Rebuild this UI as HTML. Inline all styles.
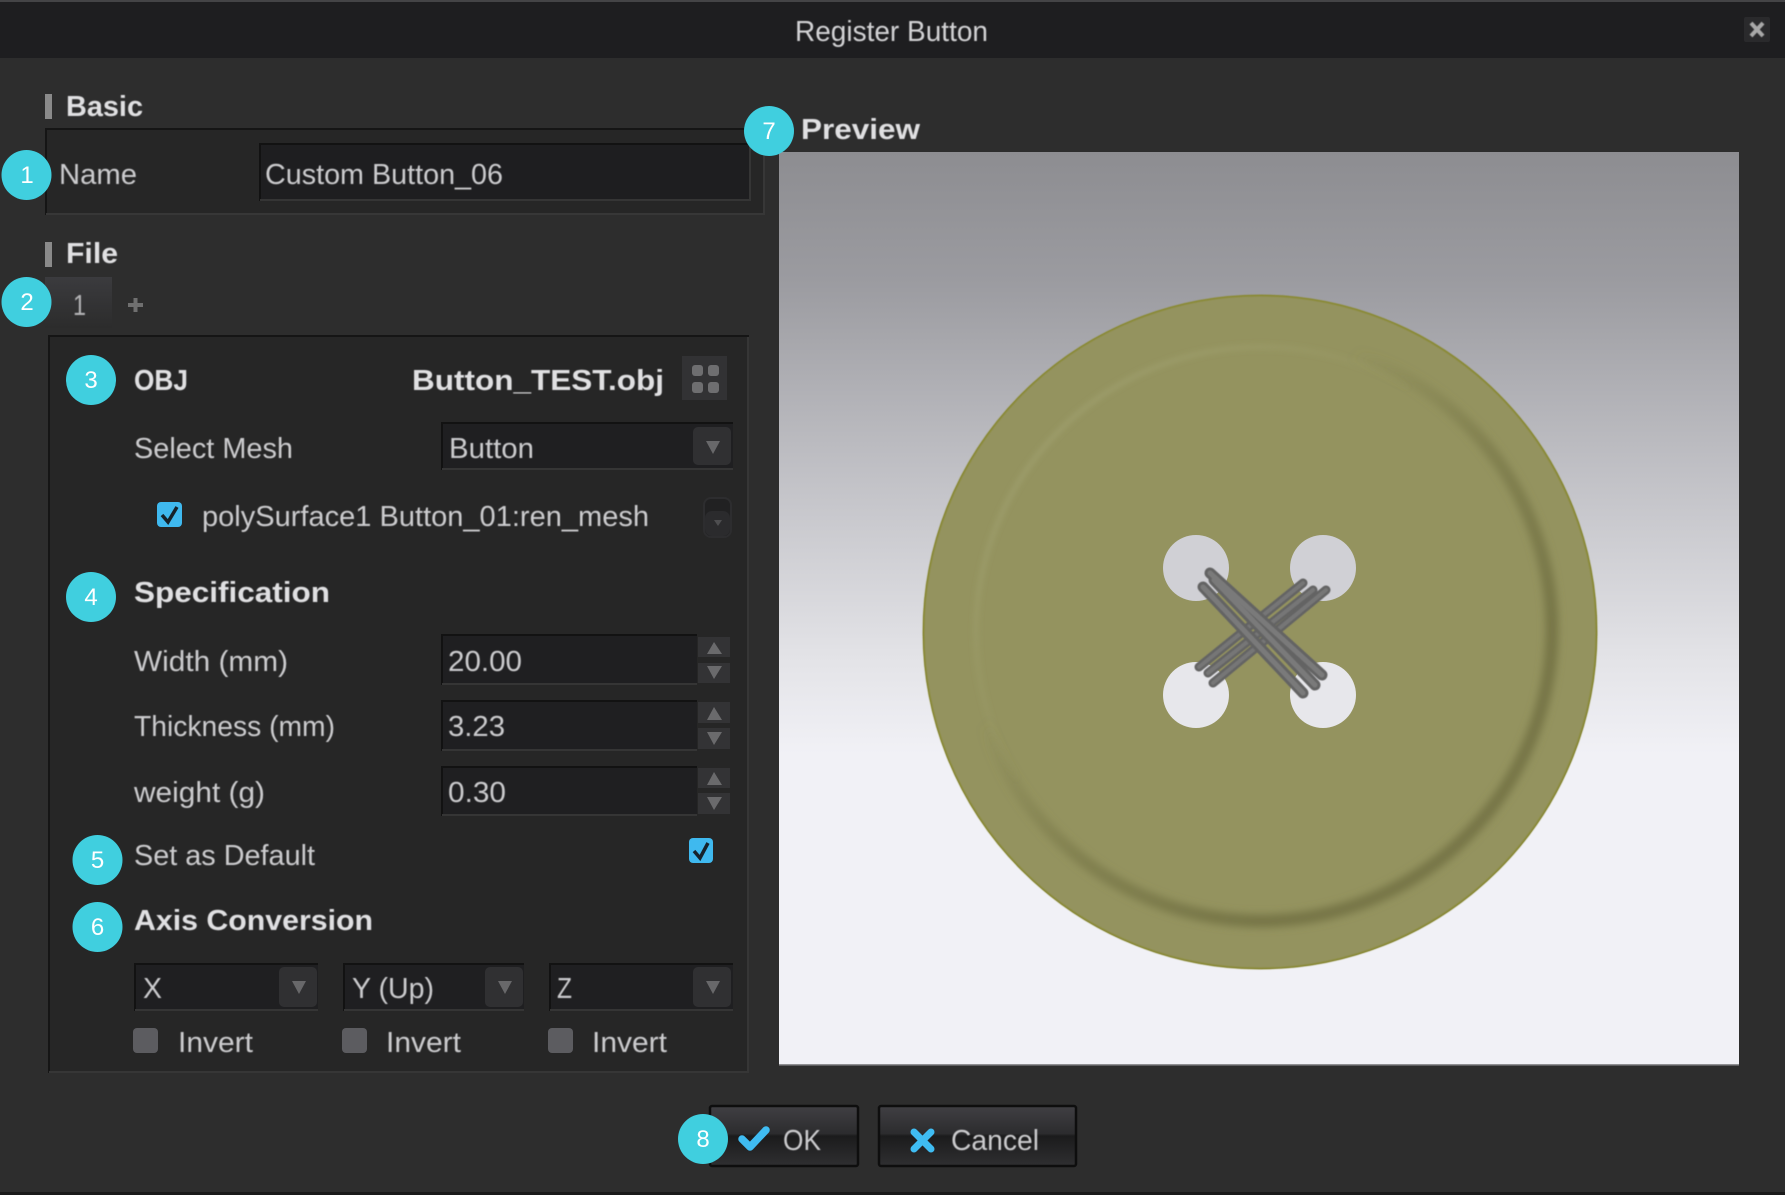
<!DOCTYPE html>
<html><head><meta charset="utf-8"><title>Register Button</title>
<style>
html,body{margin:0;padding:0;background:#2d2d2d;width:1785px;height:1195px;overflow:hidden}
svg{display:block}
text{font-family:"Liberation Sans",sans-serif}
.n{font-size:28.500px;fill:#cbcbcd}
.b{font-size:28.500px;font-weight:bold;fill:#e0e0e2}
.d{font-size:24px;fill:#fff;text-anchor:middle}
.tx{filter:url(#soft)}
</style></head><body>
<svg width="1785" height="1195" viewBox="0 0 1785 1195" xmlns="http://www.w3.org/2000/svg">
<defs>
<filter id="soft" x="-5%" y="-20%" width="110%" height="140%"><feGaussianBlur stdDeviation="0.5"/></filter>
<filter id="b3" x="-10%" y="-10%" width="120%" height="120%"><feGaussianBlur stdDeviation="4"/></filter>
<filter id="b2" x="-10%" y="-10%" width="120%" height="120%"><feGaussianBlur stdDeviation="2.500"/></filter>
<filter id="b1" x="-20%" y="-20%" width="140%" height="140%"><feGaussianBlur stdDeviation="0.6"/></filter>
<linearGradient id="bg" x1="0" y1="152" x2="0" y2="1065" gradientUnits="userSpaceOnUse">
<stop offset="0" stop-color="#8d8d91"/><stop offset=".14" stop-color="#9b9ba0"/><stop offset=".36" stop-color="#c2c2c7"/><stop offset=".56" stop-color="#e4e4e8"/><stop offset=".66" stop-color="#f1f1f6"/><stop offset="1" stop-color="#f1f1f6"/>
</linearGradient>
<linearGradient id="tab" x1="0" y1="0" x2="0" y2="1"><stop offset="0" stop-color="#3b3b3e"/><stop offset="1" stop-color="#2c2c2c"/></linearGradient>
<linearGradient id="btn" x1="0" y1="0" x2="0" y2="1">
<stop offset="0" stop-color="#403f43"/><stop offset=".46" stop-color="#2c2c2e"/><stop offset=".5" stop-color="#1b1b1c"/><stop offset="1" stop-color="#2f2f31"/>
</linearGradient>
<linearGradient id="grooveD" x1="0.1" y1="0.1" x2="0.9" y2="0.9">
<stop offset=".3" stop-color="#7a7949" stop-opacity="0"/><stop offset=".55" stop-color="#7a7949" stop-opacity=".7"/><stop offset=".8" stop-color="#777647"/><stop offset="1" stop-color="#777647"/>
</linearGradient>
<linearGradient id="grooveL" x1="0.1" y1="0.1" x2="0.9" y2="0.9">
<stop offset="0" stop-color="#9c9c6a"/><stop offset=".4" stop-color="#9c9c6a" stop-opacity="0"/>
</linearGradient>
</defs>

<rect width="1785" height="1195" fill="#2d2d2d"/>
<rect width="1785" height="58" fill="#1e1e20"/>
<rect width="1785" height="2" fill="#444446"/>
<rect y="1192" width="1785" height="3" fill="#1a1a1a"/>

<!-- close -->
<rect x="1744" y="17" width="26" height="25" rx="2" fill="#2a2a2c"/>
<path d="M1751 23L1763 36M1763 23L1751 36" stroke="#a8a8a8" stroke-width="4" fill="none" filter="url(#b1)"/>

<!-- Basic -->
<rect x="45" y="94" width="7" height="25" fill="#8a8a8a"/>
<rect x="45" y="128" width="720" height="87" fill="#262626"/>
<path d="M46 215V129H765" stroke="#151515" stroke-width="2" fill="none"/>
<path d="M46 214H764V130" stroke="#373737" stroke-width="2" fill="none"/>
<rect x="259" y="143" width="492" height="58" fill="#1e1e20"/>
<path d="M260 201V144H751" stroke="#121212" stroke-width="2" fill="none"/>
<path d="M260 200H750V145" stroke="#353535" stroke-width="2" fill="none"/>

<!-- File -->
<rect x="45" y="242" width="7" height="25" fill="#8a8a8a"/>
<rect x="45" y="277" width="67" height="51" fill="url(#tab)"/>
<rect x="128" y="303" width="15" height="4" fill="#6f6f6f"/>
<rect x="133.500" y="298" width="4" height="14" fill="#6f6f6f"/>

<!-- main panel -->
<rect x="48" y="335" width="701" height="738" fill="#262626"/>
<path d="M49 1073V336H749" stroke="#151515" stroke-width="2" fill="none"/>
<path d="M49 1072H748V337" stroke="#363636" stroke-width="2" fill="none"/>

<!-- grid icon -->
<rect x="682" y="356" width="45" height="44" fill="#323234"/>
<rect x="692" y="365" width="11" height="11" rx="3" fill="#6e6e70"/>
<rect x="708" y="365" width="11" height="11" rx="3" fill="#6e6e70"/>
<rect x="692" y="382" width="11" height="11" rx="3" fill="#6e6e70"/>
<rect x="708" y="382" width="11" height="11" rx="3" fill="#6e6e70"/>

<!-- select mesh combo -->
<rect x="441" y="422" width="292" height="48" fill="#1f1f21"/>
<path d="M442 470V423H733" stroke="#121212" stroke-width="2" fill="none"/>
<path d="M442 469H733" stroke="#353535" stroke-width="2" fill="none"/>
<rect x="693" y="427" width="38" height="38" rx="5" fill="#303032"/>
<path d="M706 441H720L713 454Z" fill="#68686a"/>

<!-- checkbox mesh -->
<rect x="157" y="502" width="25" height="25" rx="4" fill="#3fb9ef"/>
<path d="M162 515L168 522L177 507" stroke="#16222a" stroke-width="3.500" fill="none"/>
<rect x="704" y="498" width="27" height="39" rx="7" fill="#212122" stroke="#2d2d2f" stroke-width="2"/>
<rect x="705" y="511" width="25" height="25" rx="7" fill="#2b2b2d"/>
<path d="M714 520H722L718 526Z" fill="#4e4e50"/>

<!-- spin inputs -->
<rect x="441" y="634" width="256" height="51" fill="#1f1f21"/>
<path d="M442 685V635H697" stroke="#121212" stroke-width="2" fill="none"/>
<path d="M442 684H697" stroke="#353535" stroke-width="2" fill="none"/>
<rect x="698" y="637" width="32" height="20" fill="#333335"/>
<rect x="698" y="663" width="32" height="20" fill="#333335"/>
<path d="M707 654L714 642L722 654Z" fill="#6a6a6c"/>
<path d="M707 666L714 679L722 666Z" fill="#6a6a6c"/>

<rect x="441" y="700" width="256" height="51" fill="#1f1f21"/>
<path d="M442 751V701H697" stroke="#121212" stroke-width="2" fill="none"/>
<path d="M442 750H697" stroke="#353535" stroke-width="2" fill="none"/>
<rect x="698" y="702" width="32" height="21" fill="#333335"/>
<rect x="698" y="728" width="32" height="21" fill="#333335"/>
<path d="M707 720L714 707L722 720Z" fill="#6a6a6c"/>
<path d="M707 732L714 745L722 732Z" fill="#6a6a6c"/>

<rect x="441" y="766" width="256" height="50" fill="#1f1f21"/>
<path d="M442 816V767H697" stroke="#121212" stroke-width="2" fill="none"/>
<path d="M442 815H697" stroke="#353535" stroke-width="2" fill="none"/>
<rect x="698" y="768" width="32" height="20" fill="#333335"/>
<rect x="698" y="793" width="32" height="21" fill="#333335"/>
<path d="M707 785L714 772L722 785Z" fill="#6a6a6c"/>
<path d="M707 797L714 810L722 797Z" fill="#6a6a6c"/>

<!-- default checkbox -->
<rect x="689" y="838" width="24" height="25" rx="4" fill="#3fb9ef"/>
<path d="M694 851L700 858L708 843" stroke="#16222a" stroke-width="3.500" fill="none"/>

<!-- axis combos -->
<rect x="134" y="963" width="184" height="48" fill="#1f1f21"/>
<path d="M135 1011V964H318" stroke="#121212" stroke-width="2" fill="none"/>
<path d="M135 1010H318" stroke="#353535" stroke-width="2" fill="none"/>
<rect x="279" y="967" width="38" height="40" rx="5" fill="#303032"/>
<path d="M292 981H306L299 994Z" fill="#68686a"/>

<rect x="343" y="963" width="181" height="48" fill="#1f1f21"/>
<path d="M344 1011V964H524" stroke="#121212" stroke-width="2" fill="none"/>
<path d="M344 1010H524" stroke="#353535" stroke-width="2" fill="none"/>
<rect x="485" y="967" width="38" height="40" rx="5" fill="#303032"/>
<path d="M498 981H512L505 994Z" fill="#68686a"/>

<rect x="549" y="963" width="184" height="48" fill="#1f1f21"/>
<path d="M550 1011V964H733" stroke="#121212" stroke-width="2" fill="none"/>
<path d="M550 1010H733" stroke="#353535" stroke-width="2" fill="none"/>
<rect x="693" y="967" width="38" height="40" rx="5" fill="#303032"/>
<path d="M706 981H720L713 994Z" fill="#68686a"/>

<!-- invert checkboxes -->
<rect x="133" y="1028" width="25" height="25" rx="4" fill="#5c5c60"/>
<rect x="342" y="1028" width="25" height="25" rx="4" fill="#5c5c60"/>
<rect x="548" y="1028" width="25" height="25" rx="4" fill="#5c5c60"/>

<!-- preview -->
<rect x="779" y="152" width="960" height="913" fill="url(#bg)"/>
<rect x="779" y="1064" width="960" height="1.500" fill="#8f8f92"/>

<!-- button -->
<circle cx="1260" cy="632" r="337" fill="#94935f"/>
<circle cx="1260" cy="632" r="336.500" fill="none" stroke="#8b8b3a" stroke-width="2" filter="url(#b1)"/>
<circle cx="1261" cy="630" r="291" fill="none" stroke="url(#grooveD)" stroke-width="13" filter="url(#b3)"/>
<circle cx="1261" cy="632" r="285" fill="none" stroke="url(#grooveL)" stroke-width="6" filter="url(#b2)"/>
<circle cx="1196" cy="568" r="33" fill="#d0d0d5"/>
<circle cx="1323" cy="568" r="33" fill="#d0d0d5"/>
<circle cx="1196" cy="695" r="33" fill="#e7e7eb"/>
<circle cx="1323" cy="695" r="33" fill="#e7e7eb"/>
<g fill="none" stroke-linecap="round" filter="url(#b1)">
<g stroke="#646464" stroke-width="9">
<path d="M1303 583L1199 667"/><path d="M1313 590L1208 673"/><path d="M1326 590L1213 683"/>
</g>
<g stroke="#767676" stroke-width="4">
<path d="M1303 583L1199 667"/><path d="M1313 590L1208 673"/><path d="M1326 590L1213 683"/>
</g>
<g stroke="#646464" stroke-width="11">
<path d="M1210 573L1322 675"/><path d="M1203 587L1303 693"/><path d="M1214 580L1315 685"/>
</g>
<g stroke="#7a7a7a" stroke-width="5">
<path d="M1210 573L1322 675"/><path d="M1203 587L1303 693"/><path d="M1214 580L1315 685"/>
</g>
</g>

<!-- dialog buttons -->
<rect x="710" y="1106" width="148" height="60" rx="2" fill="url(#btn)" stroke="#0e0e0e" stroke-width="2.500"/>
<rect x="879" y="1106" width="197" height="60" rx="2" fill="url(#btn)" stroke="#0e0e0e" stroke-width="2.500"/>
<path d="M742 1139L750 1147L766 1130" stroke="#3fbcf2" stroke-width="7.500" fill="none" stroke-linecap="round" stroke-linejoin="round"/>
<path d="M914 1132L931 1149M931 1132L914 1149" stroke="#3fbcf2" stroke-width="7" fill="none" stroke-linecap="round"/>

<!-- text -->
<g class="tx">
<text x="795" y="41" class="n" textLength="193" lengthAdjust="spacingAndGlyphs" style="fill:#d2d2d4">Register Button</text>
<text x="66" y="116" class="b" textLength="77" lengthAdjust="spacingAndGlyphs">Basic</text>
<text x="59" y="184" class="n" textLength="78" lengthAdjust="spacingAndGlyphs">Name</text>
<text x="265" y="184" class="n" textLength="238" lengthAdjust="spacingAndGlyphs">Custom Button_06</text>
<text x="66" y="263" class="b" textLength="52" lengthAdjust="spacingAndGlyphs">File</text>
<text x="73" y="315" class="n" textLength="13" lengthAdjust="spacingAndGlyphs" style="fill:#b4b4b6">1</text>
<text x="134" y="390" class="b" textLength="54" lengthAdjust="spacingAndGlyphs">OBJ</text>
<text x="412" y="390" class="b" textLength="252" lengthAdjust="spacingAndGlyphs">Button_TEST.obj</text>
<text x="134" y="458" class="n" textLength="159" lengthAdjust="spacingAndGlyphs">Select Mesh</text>
<text x="449" y="458" class="n" textLength="85" lengthAdjust="spacingAndGlyphs">Button</text>
<text x="202" y="526" class="n" textLength="447" lengthAdjust="spacingAndGlyphs">polySurface1 Button_01:ren_mesh</text>
<text x="134" y="602" class="b" textLength="196" lengthAdjust="spacingAndGlyphs">Specification</text>
<text x="134" y="671" class="n" textLength="154" lengthAdjust="spacingAndGlyphs">Width (mm)</text>
<text x="448" y="671" class="n" textLength="74" lengthAdjust="spacingAndGlyphs">20.00</text>
<text x="134" y="736" class="n" textLength="201" lengthAdjust="spacingAndGlyphs">Thickness (mm)</text>
<text x="448" y="736" class="n" textLength="57" lengthAdjust="spacingAndGlyphs">3.23</text>
<text x="134" y="802" class="n" textLength="131" lengthAdjust="spacingAndGlyphs">weight (g)</text>
<text x="448" y="802" class="n" textLength="58" lengthAdjust="spacingAndGlyphs">0.30</text>
<text x="134" y="865" class="n" textLength="181" lengthAdjust="spacingAndGlyphs">Set as Default</text>
<text x="134" y="930" class="b" textLength="239" lengthAdjust="spacingAndGlyphs">Axis Conversion</text>
<text x="143" y="998" class="n" textLength="19" lengthAdjust="spacingAndGlyphs">X</text>
<text x="352" y="998" class="n" textLength="82" lengthAdjust="spacingAndGlyphs">Y (Up)</text>
<text x="557" y="998" class="n" textLength="15" lengthAdjust="spacingAndGlyphs">Z</text>
<text x="178" y="1052" class="n" textLength="75" lengthAdjust="spacingAndGlyphs">Invert</text>
<text x="386" y="1052" class="n" textLength="75" lengthAdjust="spacingAndGlyphs">Invert</text>
<text x="592" y="1052" class="n" textLength="75" lengthAdjust="spacingAndGlyphs">Invert</text>
<text x="801" y="139" class="b" textLength="119" lengthAdjust="spacingAndGlyphs">Preview</text>
<text x="783" y="1150" class="n" textLength="38" lengthAdjust="spacingAndGlyphs">OK</text>
<text x="951" y="1150" class="n" textLength="88" lengthAdjust="spacingAndGlyphs">Cancel</text>
</g>

<!-- callouts -->
<g fill="#40cfdf">
<circle cx="26.500" cy="175" r="25"/><circle cx="26.500" cy="302" r="25"/><circle cx="91" cy="380" r="25"/><circle cx="91" cy="597" r="25"/>
<circle cx="97.500" cy="860" r="25"/><circle cx="97.500" cy="927" r="25"/><circle cx="769" cy="131" r="25"/><circle cx="703" cy="1139" r="25"/>
</g>
<text x="27" y="183" class="d">1</text>
<text x="27" y="310" class="d">2</text>
<text x="91" y="388" class="d">3</text>
<text x="91" y="605" class="d">4</text>
<text x="97.500" y="868" class="d">5</text>
<text x="97.500" y="935" class="d">6</text>
<text x="769" y="139" class="d">7</text>
<text x="703" y="1147" class="d">8</text>
</svg>
</body></html>
